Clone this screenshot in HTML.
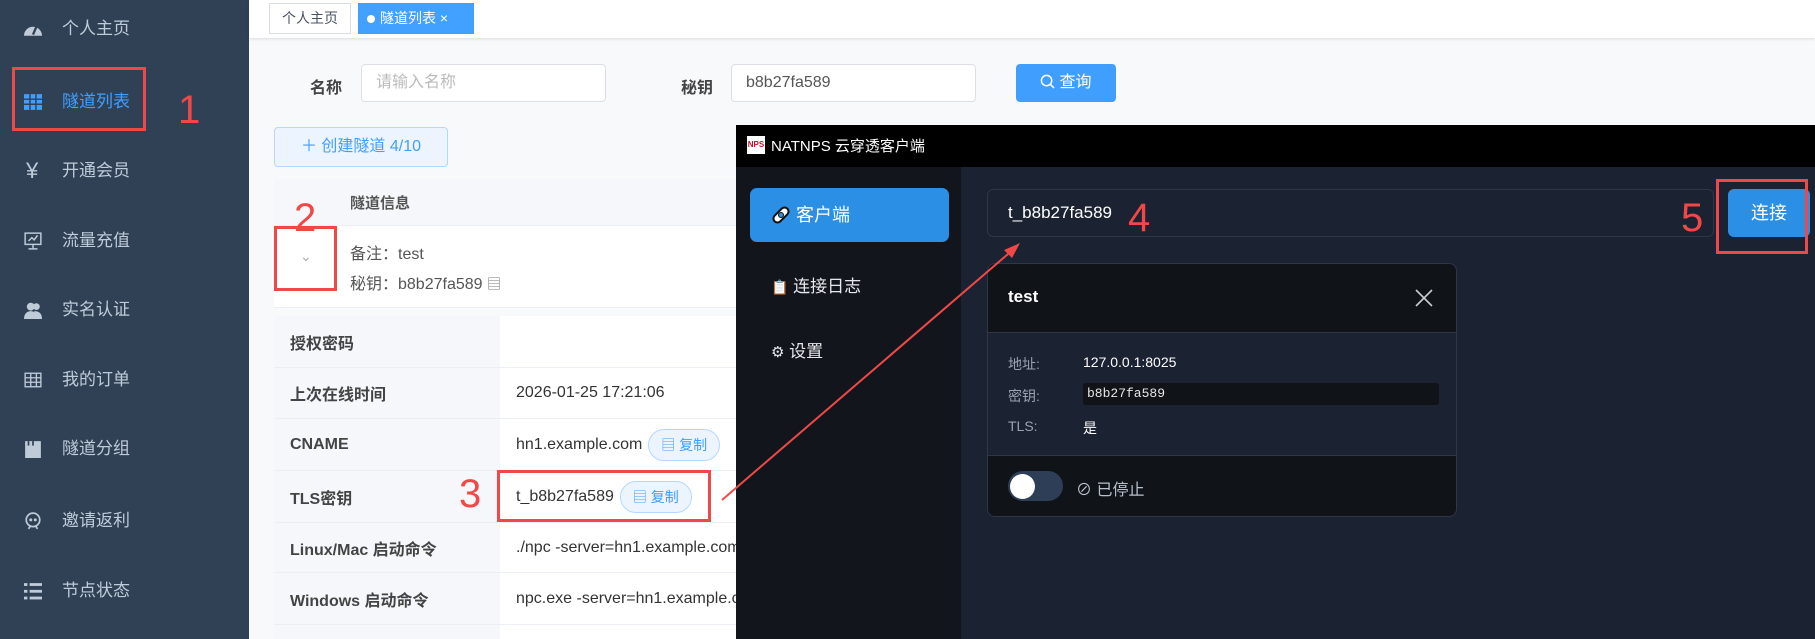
<!DOCTYPE html>
<html><head><meta charset="utf-8"><style>
*{margin:0;padding:0;box-sizing:border-box}
html{width:1815px;height:639px;overflow:hidden}
body{width:1815px;height:639px;overflow:hidden;position:relative;background:#f8f9fb;font-family:"Liberation Sans","Noto Sans CJK SC",sans-serif;}
.abs{position:absolute}
.side{left:0;top:0;width:249px;height:639px;background:#304156}
.nav{position:absolute;left:0;width:249px;height:30px;color:#bfcbd9;font-size:17px;line-height:30px}
.nav .ic{position:absolute;left:24px;top:6px;width:18px;height:18px}
.nav span{position:absolute;left:62px}
.red{border:3px solid #f04848;position:absolute}
.num{position:absolute;color:#f04848;font-size:40px;line-height:1;font-family:"Liberation Sans",sans-serif}
.inp{position:absolute;background:#fff;border:1px solid #dcdfe6;border-radius:4px;height:38px;font-size:16px;line-height:36px;padding-left:14px}
.lbl{position:absolute;font-weight:bold;color:#444;font-size:16px}
.row{position:absolute;left:274px;width:462px;border-bottom:1px solid #ebeef5}
.row .k{position:absolute;left:0;top:0;bottom:0;width:226px;background:#f5f7fa;padding-left:16px;font-weight:bold;color:#444;font-size:16px;display:flex;align-items:center}
.row .v{position:absolute;left:226px;top:0;bottom:0;right:0;background:#fff;padding-left:16px;color:#333;font-size:16px;display:flex;align-items:center;white-space:nowrap;overflow:hidden}
.pill{display:inline-block;margin-left:6px;border:1px solid #b3d8ff;background:#ecf5ff;color:#409eff;border-radius:16px;height:32px;line-height:30px;padding:0 12px;font-size:14px}
</style></head><body>
<div class="abs side"></div>
<div class="nav" style="top:14px"><svg class="ic" viewBox="0 0 16 16"><path d="M0 14a8 8 0 0 1 16 0z" fill="#bfcbd9"/><path d="M8 13L11 6" stroke="#304156" stroke-width="2"/></svg><span>个人主页</span></div>
<div class="nav" style="top:87px;color:#409eff"><svg class="ic" viewBox="0 0 16 16" fill="#409eff"><rect x="0" y="1" width="16" height="14"/><path d="M0 5.5h16M0 10h16M5.3 1v14M10.6 1v14" stroke="#304156" stroke-width="1.3"/></svg><span>隧道列表</span></div>
<div class="nav" style="top:156px"><span style="left:26px;font-size:22px">¥</span><span>开通会员</span></div>
<div class="nav" style="top:226px"><svg class="ic" viewBox="0 0 16 16" fill="none" stroke="#bfcbd9" stroke-width="1.3"><rect x="1" y="1" width="14" height="10"/><path d="M8 11v4M4 15h8M4 8l3-3 2 2 3-4"/></svg><span>流量充值</span></div>
<div class="nav" style="top:295px"><svg class="ic" viewBox="0 0 16 16" fill="#bfcbd9"><circle cx="6" cy="5" r="3.5"/><path d="M0 16c0-5 3-7 6-7s6 2 6 7z"/><circle cx="11" cy="5" r="3"/><path d="M9 9c3 0 7 1 7 7h-4z"/></svg><span>实名认证</span></div>
<div class="nav" style="top:365px"><svg class="ic" viewBox="0 0 16 16" fill="none" stroke="#bfcbd9" stroke-width="1.2"><rect x="1" y="2" width="14" height="12"/><path d="M1 6h14M1 10h14M6 2v12M11 2v12"/></svg><span>我的订单</span></div>
<div class="nav" style="top:434px"><svg class="ic" viewBox="0 0 16 16" fill="#bfcbd9"><path d="M1 1h14v15H1z"/><path d="M4 1v4M8 1v4" stroke="#304156" stroke-width="1.5"/></svg><span>隧道分组</span></div>
<div class="nav" style="top:506px"><svg class="ic" viewBox="0 0 16 16" fill="none" stroke="#bfcbd9" stroke-width="1.5"><circle cx="8" cy="7" r="6"/><path d="M4 15l2-3M12 15l-2-3"/><circle cx="6" cy="7" r=".6" fill="#bfcbd9"/><circle cx="10" cy="7" r=".6" fill="#bfcbd9"/></svg><span>邀请返利</span></div>
<div class="nav" style="top:576px"><svg class="ic" viewBox="0 0 16 16" fill="#bfcbd9"><rect x="0" y="1" width="3" height="2.5"/><rect x="5" y="1" width="11" height="2.5"/><rect x="0" y="7" width="3" height="2.5"/><rect x="5" y="7" width="11" height="2.5"/><rect x="0" y="13" width="3" height="2.5"/><rect x="5" y="13" width="11" height="2.5"/></svg><span>节点状态</span></div>
<div class="red" style="left:12px;top:67px;width:134px;height:64px"></div>
<div class="num" style="left:178px;top:90px">1</div>

<div class="abs" style="left:249px;top:0;width:1566px;height:38px;background:#fff;box-shadow:0 1px 3px rgba(0,0,0,.12)"></div>
<div class="abs" style="left:269px;top:3px;width:82px;height:31px;border:1px solid #d8dce5;background:#fff;font-size:14px;line-height:29px;text-align:center;color:#495060">个人主页</div>
<div class="abs" style="left:358px;top:3px;width:116px;height:31px;background:#42a0ff;color:#fff;font-size:14px;line-height:31px;padding-left:9px"><span style="display:inline-block;width:8px;height:8px;border-radius:50%;background:#fff;margin-right:5px"></span>隧道列表 ×</div>

<div class="lbl" style="left:310px;top:74px">名称</div>
<div class="inp" style="left:361px;top:64px;width:245px;color:#bbb">请输入名称</div>
<div class="lbl" style="left:681px;top:74px">秘钥</div>
<div class="inp" style="left:731px;top:64px;width:245px;color:#555">b8b27fa589</div>
<div class="abs" style="left:1016px;top:64px;width:100px;height:38px;background:#409eff;border-radius:4px;color:#fff;font-size:16px;line-height:38px;text-align:center"><svg width="15" height="15" viewBox="0 0 16 16" style="vertical-align:-2px;margin-right:4px"><circle cx="7" cy="7" r="5.5" fill="none" stroke="#fff" stroke-width="1.6"/><path d="M11 11l4 4" stroke="#fff" stroke-width="1.6"/></svg>查询</div>
<div class="abs" style="left:274px;top:127px;width:174px;height:40px;background:#ecf5ff;border:1px solid #b3d8ff;border-radius:4px;color:#409eff;font-size:16px;line-height:38px;text-align:center">＋ 创建隧道 4/10</div>

<div class="abs" style="left:274px;top:179px;width:462px;height:47px;background:#f5f7fa;border-bottom:1px solid #ebeef5"></div>
<div class="abs" style="left:350px;top:192px;font-weight:bold;color:#555;font-size:15px">隧道信息</div>
<div class="abs" style="left:274px;top:226px;width:462px;height:82px;background:#fff;border-bottom:1px solid #ebeef5"></div>
<div class="abs" style="left:300px;top:248px;color:#aaa;font-size:14px">⌄</div>
<div class="abs" style="left:350px;top:240px;color:#555;font-size:16px">备注：test</div>
<div class="abs" style="left:350px;top:270px;color:#555;font-size:16px">秘钥：b8b27fa589 <span style="color:#777;font-size:14px">▤</span></div>
<div class="red" style="left:274px;top:226px;width:63px;height:65px"></div>
<div class="num" style="left:294px;top:198px">2</div>

<div class="row" style="top:316px;height:52px"><div class="k">授权密码</div><div class="v"></div></div>
<div class="row" style="top:368px;height:51px"><div class="k">上次在线时间</div><div class="v">2026-01-25 17:21:06</div></div>
<div class="row" style="top:419px;height:52px"><div class="k">CNAME</div><div class="v">hn1.example.com<span class="pill">▤ 复制</span></div></div>
<div class="row" style="top:471px;height:52px"><div class="k">TLS密钥</div><div class="v">t_b8b27fa589<span class="pill">▤ 复制</span></div></div>
<div class="row" style="top:523px;height:50px"><div class="k">Linux/Mac 启动命令</div><div class="v">./npc -server=hn1.example.com</div></div>
<div class="row" style="top:573px;height:52px"><div class="k">Windows 启动命令</div><div class="v">npc.exe -server=hn1.example.com</div></div>
<div class="row" style="top:625px;height:14px;border-bottom:0"><div class="k"></div><div class="v"></div></div>
<div class="red" style="left:497px;top:470px;width:214px;height:52px"></div>
<div class="num" style="left:459px;top:474px">3</div>

<div class="abs" style="left:736px;top:125px;width:1079px;height:514px;background:#1b2231"></div>
<div class="abs" style="left:736px;top:125px;width:1079px;height:42px;background:#000"></div>
<div class="abs" style="left:747px;top:136px;width:18px;height:18px;background:#fff;color:#c8102e;font-size:8px;font-weight:bold;line-height:18px;text-align:center">NPS</div>
<div class="abs" style="left:771px;top:135px;color:#fff;font-size:15px">NATNPS 云穿透客户端</div>
<div class="abs" style="left:736px;top:167px;width:225px;height:472px;background:#12161c"></div>
<div class="abs" style="left:750px;top:188px;width:199px;height:54px;background:#2b8fe6;border-radius:7px;color:#fff;font-size:18px;line-height:54px;padding-left:46px">客户端</div>
<svg class="abs" style="left:770px;top:204px" width="22" height="22" viewBox="0 0 22 22"><rect x="2" y="7" width="18" height="8" rx="4" transform="rotate(-45 11 11)" fill="#fff" stroke="#111" stroke-width="2"/><circle cx="11" cy="11" r="2.5" fill="#2b8fe6" stroke="#111"/></svg>
<div class="abs" style="left:771px;top:272px;color:#e6e8eb;font-size:17px"><span style="font-size:14px">📋</span> 连接日志</div>
<div class="abs" style="left:771px;top:337px;color:#e6e8eb;font-size:17px"><span style="font-size:15px">⚙</span> 设置</div>

<div class="abs" style="left:987px;top:189px;width:727px;height:48px;border:1px solid #2d3748;border-radius:6px;background:#1b2231;color:#fff;font-size:17px;line-height:46px;padding-left:20px">t_b8b27fa589</div>
<div class="abs" style="left:1728px;top:189px;width:82px;height:48px;background:#2b8fe6;border-radius:6px;color:#fff;font-size:18px;line-height:48px;text-align:center">连接</div>
<div class="red" style="left:1716px;top:179px;width:92px;height:75px"></div>
<div class="num" style="left:1128px;top:198px">4</div>
<div class="num" style="left:1681px;top:198px">5</div>

<div class="abs" style="left:987px;top:263px;width:470px;height:254px;border:1px solid #2d3748;border-radius:8px;background:#1b2231;overflow:hidden">
 <div style="position:absolute;left:0;top:0;right:0;height:69px;background:#101419;border-bottom:1px solid #2d3748"></div>
 <div style="position:absolute;left:20px;top:23px;color:#fff;font-weight:bold;font-size:17px">test</div>
 <svg style="position:absolute;left:427px;top:25px" width="18" height="18" viewBox="0 0 18 18"><path d="M1 1L17 17M17 1L1 17" stroke="#c8ccd4" stroke-width="1.6"/></svg>
 <div style="position:absolute;left:20px;top:90px;color:#9aa3b2;font-size:14px">地址:</div>
 <div style="position:absolute;left:95px;top:90px;color:#fff;font-size:14px">127.0.0.1:8025</div>
 <div style="position:absolute;left:20px;top:122px;color:#9aa3b2;font-size:14px">密钥:</div>
 <div style="position:absolute;left:95px;top:119px;width:356px;height:22px;background:#101419;border-radius:3px;color:#e6e6e6;font-family:'Liberation Mono',monospace;font-size:13px;line-height:22px;padding-left:4px">b8b27fa589</div>
 <div style="position:absolute;left:20px;top:154px;color:#9aa3b2;font-size:14px">TLS:</div>
 <div style="position:absolute;left:95px;top:154px;color:#fff;font-size:14px">是</div>
 <div style="position:absolute;left:0;top:191px;right:0;bottom:0;background:#101419;border-top:1px solid #2d3748"></div>
 <div style="position:absolute;left:20px;top:207px;width:55px;height:30px;border-radius:15px;background:#2d3e56"></div>
 <div style="position:absolute;left:22px;top:210px;width:25px;height:25px;border-radius:50%;background:#fff"></div>
 <div style="position:absolute;left:88px;top:212px;color:#b8c0cc;font-size:16px">⊘ 已停止</div>
</div>

<svg class="abs" style="left:0;top:0" width="1815" height="639"><line x1="722" y1="500" x2="1015" y2="248" stroke="#f04848" stroke-width="2"/><path d="M1020 243L1004 250L1012 258Z" fill="#f04848"/></svg>
</body></html>
